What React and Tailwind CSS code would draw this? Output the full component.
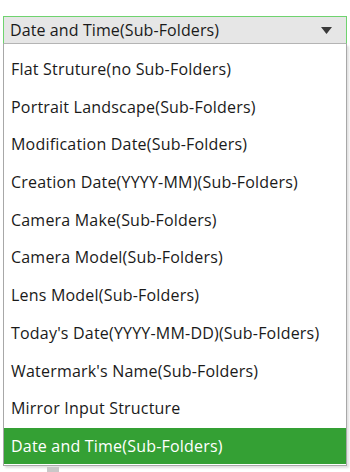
import React from "react";

const items = [
    "Flat Struture(no Sub-Folders)",
    "Portrait Landscape(Sub-Folders)",
    "Modification Date(Sub-Folders)",
    "Creation Date(YYYY-MM)(Sub-Folders)",
    "Camera Make(Sub-Folders)",
    "Camera Model(Sub-Folders)",
    "Lens Model(Sub-Folders)",
    "Today's Date(YYYY-MM-DD)(Sub-Folders)",
    "Watermark's Name(Sub-Folders)",
    "Mirror Input Structure",
    "Date and Time(Sub-Folders)",
];

const selected = "Date and Time(Sub-Folders)";

const App = () => {
    return (
        <div
            className="w-[350px] h-[472px] bg-white pt-4 pl-[3px] relative overflow-hidden"
            style={{ fontFamily: '"Open Sans", "Noto Sans", sans-serif' }}
        >
            <div className="w-[344px]">
                <div className="flex items-center justify-between h-[28px] bg-[#e6e6e6] border border-[#6fd36f] border-b-[#b4b4b4] pl-[6px] pr-[14px]">
                    <span className="text-[16px] text-[#1a1a1a] tracking-[0.1px]">{selected}</span>
                    <svg width="11" height="7" viewBox="0 0 11 7">
                        <polygon points="0,0 11,0 5.5,7" fill="#3a3a3a" />
                    </svg>
                </div>
                <div className="flex flex-col gap-[1.7px] bg-white border border-t-0 border-[#a8a8a8] pt-[7px] pb-[1px] shadow-[2px_2px_2px_rgba(0,0,0,0.12)]">
                    {items.map((item, i) => (
                        <div
                            key={i}
                            className={
                                i === items.length - 1
                                    ? "flex items-center h-9 pl-[7px] bg-[#34a034] text-white text-[16px] tracking-[0.2px]"
                                    : "flex items-center h-9 pl-[7px] text-[#1a1a1a] text-[16px] tracking-[0.2px]"
                            }
                        >
                            {item}
                        </div>
                    ))}
                </div>
            </div>
            <div className="absolute left-[47px] top-[467px] w-[12px] h-[6px] bg-[#c8c8c8]" />
        </div>
    );
};

export default App;
